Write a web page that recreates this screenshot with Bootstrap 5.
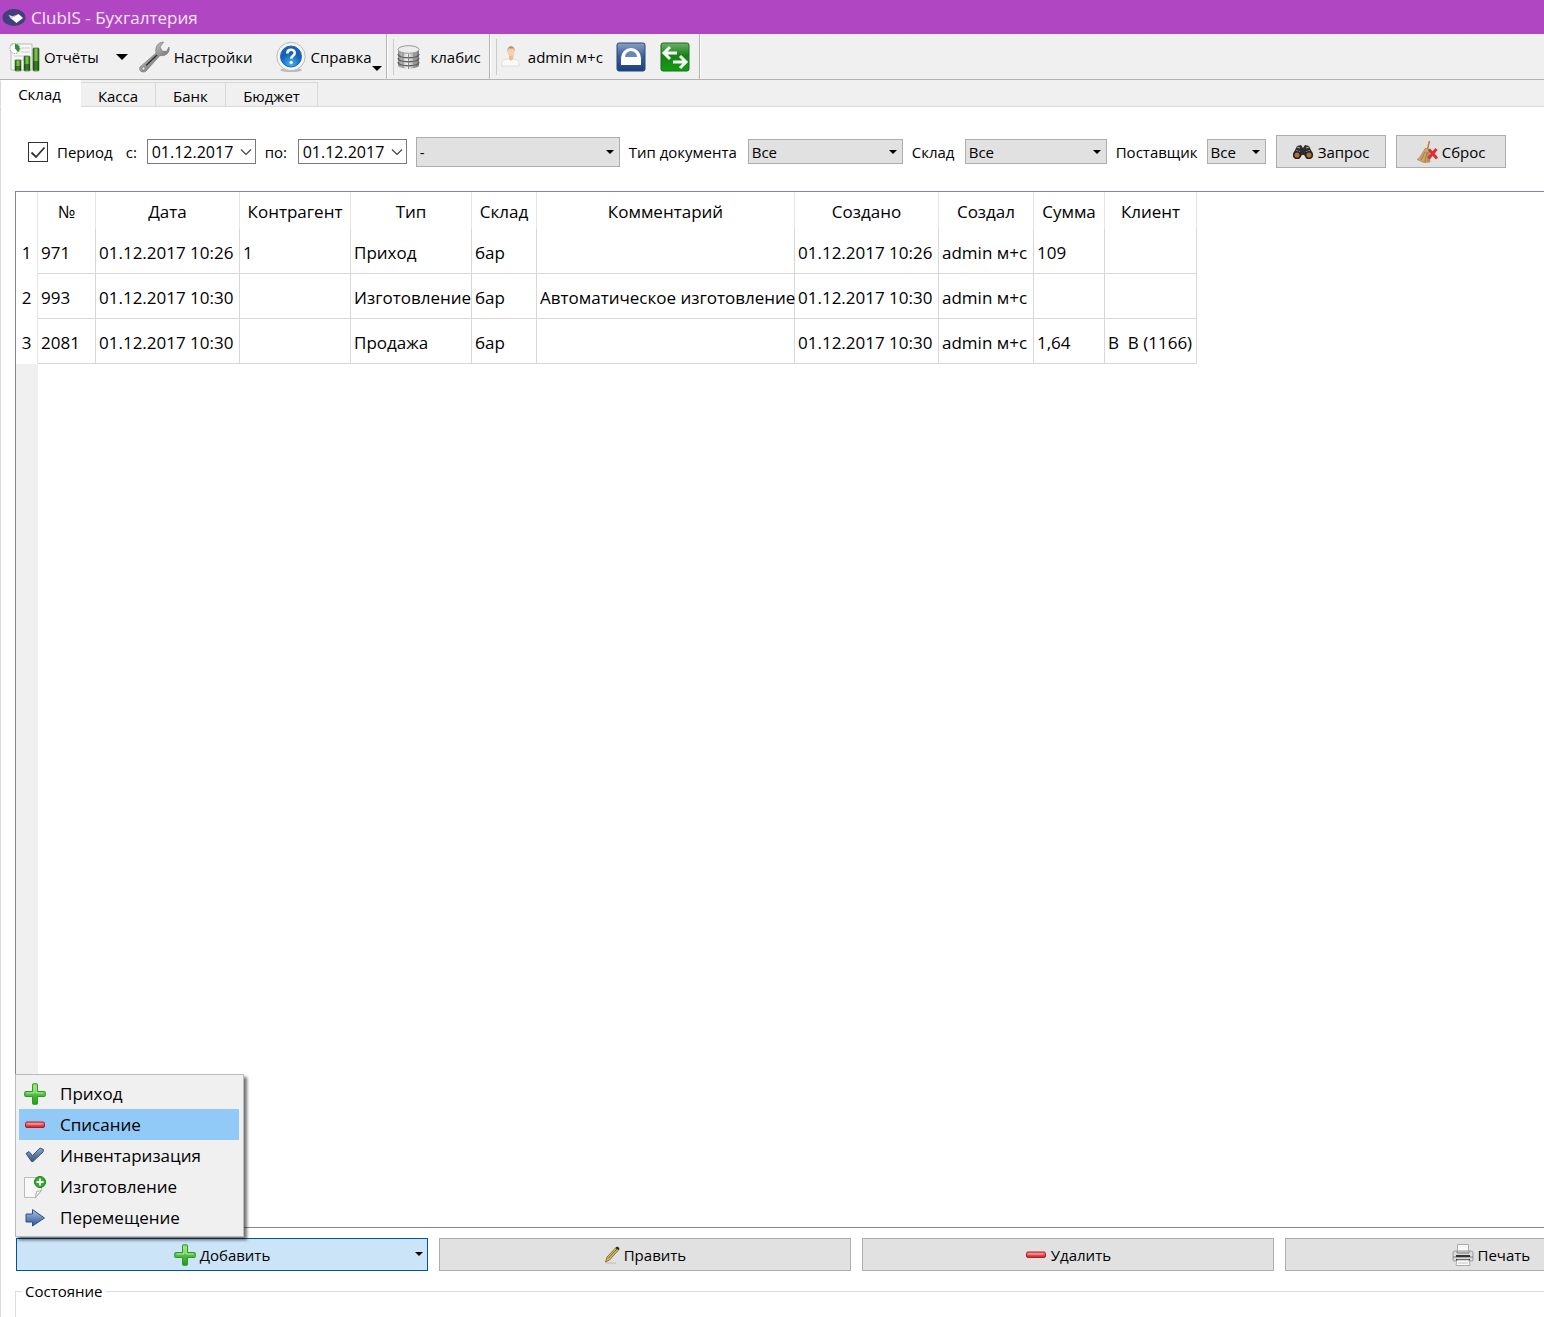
<!DOCTYPE html>
<html lang="ru">
<head>
<meta charset="utf-8">
<meta name="viewport" content="width=device-width, initial-scale=1">
<title>ClubIS - Бухгалтерия</title>
<link rel="stylesheet" href="https://cdn.jsdelivr.net/npm/bootstrap@5.3.0/dist/css/bootstrap.min.css">
<style>
body{font-family:"Open Sans","Noto Sans",sans-serif;font-size:15px;line-height:20px;color:#000;background:#fff;overflow:hidden}
svg{flex:none;display:block}
.titlebar{background:#b146c2;color:#f8e6fb;height:34px;font-size:17px;padding:1px 2px 0;gap:5px}
.toolbar{background:#f0f0f0;height:46px;border-bottom:1px solid #b4b4b4}
.tool-group{height:100%;border-right:1px solid #b4b4b4;box-shadow:1px 0 0 #fff}
.tool-main{padding-left:9px}
.grip{width:1px;height:36px;background:#ccc;align-self:center;margin-left:6px}
.tool-btn{border:0;background:none;padding:0;color:#000;display:flex;align-items:center;gap:4px;white-space:nowrap}
.tool-drop{margin-left:17px;margin-right:10px}
.tool-help{margin:0 15px 0 22px}
.tool-square{margin-left:12px}
.caret-down{width:0;height:0;border:6px solid transparent;border-top-color:#000;border-bottom:0}
.caret-down.tiny{border-width:5px 5px 0}
.caret-down.mini{border-width:4px 4px 0}
.tabstrip{background:#f0f0f0;height:27px;box-shadow:inset 0 -1px #d9d9d9;border:0}
.tabstrip .nav-link{border:1px solid #d9d9d9;border-left:0;border-radius:0;color:#000;padding:3px 0 0;margin:0;height:25px;line-height:20px;background:#f0f0f0;text-align:center}
.tabstrip .nav-link.active{height:27px;background:#fff;border-color:#fff;border-left:1px solid #d9d9d9;padding:3px 2px 0 0}
.tab-w1{width:81px}.tab-w2{width:75px}.tab-w3{width:70px}.tab-w4{width:92px}
.page{border-left:1px solid #d9d9d9;padding:28px 0 0 14px;min-height:0;overflow:hidden}
.filters{height:33px;gap:9px;padding-left:13px;white-space:nowrap}
.filters .form-check-input{width:20px;height:20px;border:1px solid #333;border-radius:0;margin:0;flex:none;background-color:#fff}
.filters .form-check-input:checked{background-image:url("data:image/svg+xml,%3Csvg xmlns='http://www.w3.org/2000/svg' viewBox='0 0 18 18'%3E%3Cpath d='M2.5 9.5 7 14 15.5 4.5' fill='none' stroke='%23333' stroke-width='1.8'/%3E%3C/svg%3E");background-size:contain}
.lbl-from{min-width:12px}.lbl-to{min-width:24px}.lbl-type{min-width:110px}.lbl-store{min-width:44px}.lbl-vendor{min-width:81px}
.date-box,.combo{height:25px;border-radius:0;color:#000;font-size:15px;line-height:20px;flex:none}
.date-box{width:109px;border:1px solid #7a7a7a;background:#fff url("data:image/svg+xml,%3Csvg xmlns='http://www.w3.org/2000/svg' viewBox='0 0 12 8'%3E%3Cpath d='M1 1.5 6 6.5 11 1.5' fill='none' stroke='%23444' stroke-width='1.2'/%3E%3C/svg%3E") right 3px center/12px 8px no-repeat;padding:1px 4px;font-size:16px}
.combo{border:1px solid #adadad;appearance:none;background:#e1e1e1 url("data:image/svg+xml,%3Csvg xmlns='http://www.w3.org/2000/svg' viewBox='0 0 8 4'%3E%3Cpath d='M0 0H8L4 4Z'/%3E%3C/svg%3E") right 5px center/8px 4px no-repeat;padding:1px 3px}
.combo-tall{height:30px;width:204px}
.combo-type{width:155px}.combo-store{width:142px}.combo-vendor{width:59px}
.push{height:33px;border:1px solid #adadad;border-radius:0;background:#e1e1e1;color:#000;padding:0;font-size:15px;line-height:20px;display:flex;align-items:center;justify-content:center;gap:4px}
.push:hover{background:#e5f1fb;color:#000}
.push-fixed{width:110px;flex:none;margin-left:1px}
.push.opened{background:#cce4f7;border-color:#005499}
.grid-box{margin-top:23px;border:1px solid #828790;border-right:0;min-height:0;background:linear-gradient(#f0f0f0,#f0f0f0) 0 0/22px 100% no-repeat}
.doc-grid{table-layout:fixed;width:1181px;font-size:17px;line-height:24px;background:#fff;margin:0;border-collapse:separate;border-spacing:0}
.doc-grid th,.doc-grid td{padding:3px 0 0 3px;white-space:nowrap;font-weight:400}
.doc-grid thead th{height:37px;text-align:center;border-right:1px solid #e5e5e5;padding:2px 0 0}
.doc-grid tbody td{height:45px;border-right:1px solid #d8d8d8;border-bottom:1px solid #d8d8d8}
.doc-grid tbody th{text-align:center;border-right:1px solid #e5e5e5;padding:2px 0 0}
.w-num{width:22px}.w-id{width:58px}.w-date{width:144px}.w-agent{width:111px}.w-kind{width:121px}.w-store{width:65px}.w-note{width:258px}.w-author{width:95px}.w-sum{width:71px}.w-client{width:92px}
.actions{width:110%;gap:11px;margin-top:10px;padding-left:1px}
.actions .slot{flex:1 1 0;position:relative}
.actions .push{width:100%}
.add-menu{position:absolute;left:-1px;bottom:34px;width:229px;background:#f0f0f0;border:1px solid #bbb;border-radius:0;box-shadow:3px 3px 3px rgba(0,0,0,.55);padding:3px 4px 3px 3px;margin:0;font-size:17px;z-index:5;list-style:none}
.add-menu button{display:flex;align-items:center;gap:14px;height:31px;width:100%;border:0;background:none;padding:0 5px;color:#000}
.add-menu button.current{background:#91c9f7}
.menu-caret{position:absolute;right:5px;top:14px}
.status{height:36px;margin-top:10px}
.status legend{font-size:15px;line-height:20px;width:auto;float:none;margin:0 0 0 6px;padding:0 3px}
.status fieldset{border:1px solid #dcdcdc;border-right:0;height:60px;min-width:0;padding:0;margin:0}
</style>
<script src="https://cdn.jsdelivr.net/npm/bootstrap@5.3.0/dist/js/bootstrap.bundle.min.js"></script>
</head>
<body class="d-flex flex-column vh-100">
<svg width="0" height="0" class="position-absolute" aria-hidden="true">
<defs>
<linearGradient id="gGreen" x2="0" y2="1"><stop stop-color="#8fe070"/><stop offset="1" stop-color="#1f9a1a"/></linearGradient>
<linearGradient id="gDark" x2="1" y2="0"><stop stop-color="#1d5c10"/><stop offset=".5" stop-color="#8fd05a"/><stop offset="1" stop-color="#1d5c10"/></linearGradient>
<linearGradient id="gRed" x2="0" y2="1"><stop stop-color="#f58a8a"/><stop offset="1" stop-color="#d02028"/></linearGradient>
<linearGradient id="gBlue" x2="0" y2="1"><stop stop-color="#a9c4e4"/><stop offset="1" stop-color="#2b5596"/></linearGradient>
<linearGradient id="gCheck" x2="0" y2="1"><stop stop-color="#8fa9c8"/><stop offset="1" stop-color="#34547f"/></linearGradient>
<linearGradient id="gSteel" x2="1" y2="1"><stop stop-color="#f4f4f4"/><stop offset=".5" stop-color="#9b9b9b"/><stop offset="1" stop-color="#4a4a4a"/></linearGradient>
<linearGradient id="gDisk" x2="1" y2="0"><stop stop-color="#8c8c8c"/><stop offset=".45" stop-color="#f2f2f2"/><stop offset="1" stop-color="#777"/></linearGradient>
<linearGradient id="gLock" x2="0" y2="1"><stop stop-color="#8ba0c4"/><stop offset=".45" stop-color="#3f5f98"/><stop offset="1" stop-color="#1c3f80"/></linearGradient>
<linearGradient id="gSwap" x2="0" y2="1"><stop stop-color="#6fb06a"/><stop offset=".45" stop-color="#18801a"/><stop offset="1" stop-color="#10a010"/></linearGradient>
<radialGradient id="gHelp" cy=".85"><stop stop-color="#45b3f5"/><stop offset="1" stop-color="#1460bd"/></radialGradient>
<symbol id="plus" viewBox="0 0 22 22"><path d="M9.200.8h3.600q.7 0 .7.7V8.500h7q.8 0 .8.800v3.400q0 .8-.8.800H13.500v7q0 .8-.8.800H9.300q-.8 0-.8-.8V13.500H1.500q-.8 0-.8-.8V9.300q0-.8.800-.8H8.500V1.500q0-.7.700-.7Z" fill="url(#gGreen)" stroke="#2c9a24"/><path d="M10 2.500v7.500H2.500M12 2.500v7.500h7.500" fill="none" stroke="#c9f5b5" opacity=".8"/></symbol>
<symbol id="minus" viewBox="0 0 22 22"><rect x="1.500" y="8" width="19" height="5.500" rx="1.500" fill="url(#gRed)" stroke="#b51b22"/><path d="M3 10h15" stroke="#ffb9b9" opacity=".8"/></symbol>
</defs>
</svg>

<header class="titlebar d-flex align-items-center flex-shrink-0">
<svg width="24" height="20" viewBox="0 0 24 20"><ellipse cx="12" cy="9.500" rx="11.500" ry="8.500" fill="#423f7c"/><path d="m9 10.500 7.500-4.500 4.500 4-6.500 5Z" fill="#fff"/><path d="m6.500 7 4.500 1.200L15 6.500 9 11Z" fill="#d5d4e8"/></svg>
<span>ClubIS - Бухгалтерия</span>
</header>

<div class="toolbar d-flex flex-shrink-0" role="toolbar">
<div class="tool-group tool-main d-flex align-items-center position-relative">
<button class="tool-btn"><svg width="31" height="32" viewBox="0 0 31 32"><path d="M2 3h21v26H2Z" fill="#f7f7f7" stroke="#bbb"/><path d="M12 7h9M12 11h9M5 15h12M5 19h10" stroke="#ccc"/><circle cx="6" cy="7.500" r="5" fill="#fff" stroke="#999" stroke-dasharray="1.500 1"/><path d="M6 7.500V3a4.500 4.500 0 0 1 3 8Z" fill="#2a9230"/><g fill="url(#gDark)" stroke="#225e14" stroke-width=".6"><rect x="6" y="19" width="6" height="11" rx="1"/><rect x="15" y="15" width="6" height="15" rx="1"/><rect x="24" y="7" width="6" height="23" rx="1"/></g><path d="M6 25h6v4H6ZM15 23h6v6h-6ZM24 20h6v9h-6Z" fill="#144a0a" opacity=".6"/></svg><span>Отчёты</span></button>
<button class="tool-btn tool-drop" aria-label="Список отчётов"><span class="caret-down"></span></button>
<button class="tool-btn"><svg width="32" height="34" viewBox="0 0 32 34"><path d="M2 27 18 13C17 7 19.500 2.500 25.500 2L22 7l2 4 4.500.5L31 7C32 12.500 28 16.500 22 15.500L8 31C5 33.500 0 31 2 27Z" fill="url(#gSteel)" stroke="#777" stroke-width=".7"/><path d="M8 25.500 19 15" stroke="#333" stroke-width="1.600"/><circle cx="5.500" cy="28.500" r="1.500" fill="#eee" stroke="#555" stroke-width=".5"/></svg><span>Настройки</span></button>
<button class="tool-btn tool-help"><svg width="32" height="32" viewBox="0 0 32 32"><ellipse cx="16" cy="29" rx="11" ry="2" fill="#bbb"/><circle cx="16" cy="15.500" r="14.200" fill="#f4f4f4" stroke="#bcbcbc"/><circle cx="16" cy="15.500" r="10.500" fill="url(#gHelp)" stroke="#2a62a8"/><path d="M12.300 12.500c0-5 7.400-4.800 7.400-.5 0 2.700-3.500 2.700-3.500 5.800" fill="none" stroke="#fff" stroke-width="2.600"/><circle cx="16.200" cy="21.300" r="1.600" fill="#fff"/></svg><span>Справка</span></button>
<span class="caret-down tiny position-absolute bottom-0 end-0 mb-2 me-1"></span>
</div>
<div class="tool-group d-flex align-items-center pe-2"><span class="grip"></span>
<button class="tool-btn gap-2"><svg width="28" height="26" viewBox="0 0 28 26"><path d="M4 5.500v15.500c0 5 21 5 21 0V5.500Z" fill="url(#gDisk)"/><path d="M4 10c0 5 21 5 21 0M4 14c0 5 21 5 21 0M4 18c0 5 21 5 21 0" fill="none" stroke="#5e5e5e" stroke-width="1.300"/><path d="M9 9v15M14.500 10v15M20 9v15" stroke="#777" stroke-width=".8"/><ellipse cx="14.500" cy="5.500" rx="10.500" ry="3.800" fill="#ececec" stroke="#999"/></svg><span>клабис</span></button>
</div>
<div class="tool-group d-flex align-items-center pe-2"><span class="grip"></span>
<button class="tool-btn gap-2"><svg width="23" height="26" viewBox="0 0 23 26"><path d="M5 22c-1-5 2-7 6-7h4c5 0 8 2 7 7Z" fill="#fafafa" stroke="#ddd"/><path d="M12 11h4.500l-.5 4-2 2-2-2Z" fill="#e9bd94"/><ellipse cx="14" cy="7.500" rx="3.500" ry="5" fill="#f2cfae"/><path d="M10 7.500c0-7 8-7 8 0l-1.500-3-5 0Z" fill="#b88f68"/></svg><span>admin м+с</span></button>
<button class="tool-btn tool-square" aria-label="Блокировка"><svg width="32" height="32" viewBox="0 0 32 32"><rect x="2" y="2" width="28" height="28" rx="2" fill="url(#gLock)" stroke="#274779"/><path d="M6 24V17a10 10 0 0 1 20 0v7Z" fill="#fff"/><path d="M10 16a6 6 0 0 1 12 0Z" fill="#6c86b4"/></svg></button>
<button class="tool-btn tool-square" aria-label="Сменить пользователя"><svg width="32" height="32" viewBox="0 0 32 32"><rect x="2" y="2" width="28" height="28" rx="2" fill="url(#gSwap)" stroke="#1a6d1c"/><path d="M18 12H5m6-6-6 6 6 6M14 21h13m-6-6 6 6-6 6" fill="none" stroke="#f3fff0" stroke-width="3"/></svg></button>
</div>
</div>

<nav class="tabstrip nav nav-tabs flex-shrink-0 align-items-end">
<a class="nav-link tab-w1 active" href="#">Склад</a>
<a class="nav-link tab-w2" href="#">Касса</a>
<a class="nav-link tab-w3" href="#">Банк</a>
<a class="nav-link tab-w4" href="#">Бюджет</a>
</nav>

<main class="page d-flex flex-column flex-grow-1">
<form class="filters d-flex align-items-center flex-shrink-0">
<input class="form-check-input" type="checkbox" id="period" checked>
<label for="period">Период</label>
<label for="from" class="lbl-from ms-1">с:</label>
<input class="date-box" id="from" type="text" value="01.12.2017">
<label for="to" class="lbl-to">по:</label>
<input class="date-box" id="to" type="text" value="01.12.2017">
<select class="combo combo-tall" aria-label="Контрагент"><option>-</option></select>
<label for="dtype" class="lbl-type">Тип документа</label>
<select class="combo combo-type" id="dtype"><option>Все</option></select>
<label for="store" class="lbl-store">Склад</label>
<select class="combo combo-store" id="store"><option>Все</option></select>
<label for="vendor" class="lbl-vendor">Поставщик</label>
<select class="combo combo-vendor" id="vendor"><option>Все</option></select>
<button type="button" class="btn push push-fixed"><svg width="22" height="18" viewBox="0 0 22 18"><path d="m2 9 3-6 4-1 2 3 2-3 4 1 3 6 1 3-3 4h-3l-3-4h-2l-3 4H4l-3-3Z" fill="#2d2d2d"/><path d="m5 4 3 1M14 5l3-1M4 8l4 1M14 9l4-1" stroke="#aaa" stroke-width="1.300"/><circle cx="5" cy="12" r="3.300" fill="#b8692c" stroke="#222" stroke-width="1.500"/><circle cx="17" cy="12" r="3.300" fill="#b8692c" stroke="#222" stroke-width="1.500"/></svg>Запрос</button>
<button type="button" class="btn push push-fixed"><svg width="22" height="24" viewBox="0 0 22 24"><path d="M13.500 1 11.500 9" stroke="#b98243" stroke-width="1.600"/><path d="m9.500 8 4 1 .5 13-6 .5-7-3C5 17 6.500 12 9.500 8Z" fill="#c9a36c" stroke="#a27c46" stroke-width=".6"/><path d="M9 12 5 20M11 12l-2 10M12 12v10" stroke="#8d6a3c" stroke-width=".7"/><path d="m13 9.500 8 9M20.500 9l-8 9.500" stroke="#da3035" stroke-width="3"/></svg>Сброс</button>
</form>

<section class="grid-box flex-grow-1">
<table class="doc-grid">
<colgroup><col class="w-num"><col class="w-id"><col class="w-date"><col class="w-agent"><col class="w-kind"><col class="w-store"><col class="w-note"><col class="w-date"><col class="w-author"><col class="w-sum"><col class="w-client"></colgroup>
<thead><tr><th></th><th>№</th><th>Дата</th><th>Контрагент</th><th>Тип</th><th>Склад</th><th>Комментарий</th><th>Создано</th><th>Создал</th><th>Сумма</th><th>Клиент</th></tr></thead>
<tbody>
<tr><th>1</th><td>971</td><td>01.12.2017 10:26</td><td>1</td><td>Приход</td><td>бар</td><td></td><td>01.12.2017 10:26</td><td>admin м+с</td><td>109</td><td></td></tr>
<tr><th>2</th><td>993</td><td>01.12.2017 10:30</td><td></td><td>Изготовление</td><td>бар</td><td>Автоматическое изготовление</td><td>01.12.2017 10:30</td><td>admin м+с</td><td></td><td></td></tr>
<tr><th>3</th><td>2081</td><td>01.12.2017 10:30</td><td></td><td>Продажа</td><td>бар</td><td></td><td>01.12.2017 10:30</td><td>admin м+с</td><td>1,64</td><td>В&nbsp; В (1166)</td></tr>
</tbody>
</table>
</section>

<div class="actions d-flex flex-shrink-0">
<div class="slot">
<ul class="add-menu">
<li><button><svg width="22" height="22"><use href="#plus"/></svg>Приход</button></li>
<li><button class="current"><svg width="22" height="22"><use href="#minus"/></svg>Списание</button></li>
<li><button><svg width="22" height="22" viewBox="0 0 22 22"><path d="m2 8.500 3-2 3.500 4L16 3l3.500 1.500-.5 2.500L9 16.500H7.500Z" fill="url(#gCheck)" stroke="#3a5885"/></svg>Инвентаризация</button></li>
<li><button><svg width="22" height="22" viewBox="0 0 22 22"><path d="M.5 1.500h17V14l-6 7.500H.5Z" fill="#f8f8f8" stroke="#bbb"/><path d="m11.500 21.500 1-6 5-1Z" fill="#fff" stroke="#aaa"/><circle cx="16" cy="6" r="5.500" fill="#2fb02a" stroke="#158011"/><path d="M16 2.500v7M12.500 6h7" stroke="#fff" stroke-width="2"/></svg>Изготовление</button></li>
<li><button><svg width="22" height="22" viewBox="0 0 22 22"><path d="M2 7h6.500V2.500L20.500 11 8.500 19V15H2Z" fill="url(#gBlue)" stroke="#2f5288"/></svg>Перемещение</button></li>
</ul>
<button class="btn push opened" aria-expanded="true"><svg width="22" height="22"><use href="#plus"/></svg>Добавить<span class="caret-down mini menu-caret"></span></button>
</div>
<div class="slot"><button class="btn push"><svg width="16" height="18" viewBox="0 0 16 18"><path d="M2 17h10" stroke="#bbb"/><path d="m1.500 16 1.500-5L12 1.500l3 2L5.500 14Z" fill="#d9bb5c" stroke="#6b5a2c" stroke-width=".8"/><path d="m4 12.500 9-9.500" stroke="#7a6432" stroke-width="1"/><path d="m11.500 2 1.500-1.500 2.500 1.500-1 2Z" fill="#222"/></svg>Править</button></div>
<div class="slot"><button class="btn push"><svg width="22" height="22"><use href="#minus"/></svg>Удалить</button></div>
<div class="slot"><button class="btn push"><svg width="22" height="22" viewBox="0 0 22 22"><path d="M5.500.5h11V9h-11Z" fill="#f8f8f8" stroke="#aaa"/><path d="M1 9q0-2 2-2h16q2 0 2 2v7q0 1-1 1H2q-1 0-1-1Z" fill="#dcdcdc" stroke="#999"/><path d="M5 7.500V9h12V7.500M1 13h20" stroke="#777" fill="none"/><path d="M4 11h14v2H4ZM4 15h14v2H4Z" fill="#333"/><path d="M5 16h12l1 5.500H4Z" fill="#fff" stroke="#aaa"/><path d="M6 19h10" stroke="#bbb"/></svg>Печать</button></div>
</div>
<div class="status flex-shrink-0"><fieldset><legend>Состояние</legend></fieldset></div>
</main>
</body>
</html>
